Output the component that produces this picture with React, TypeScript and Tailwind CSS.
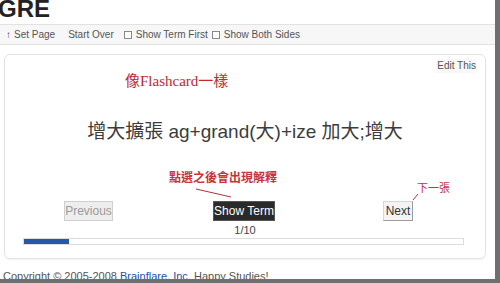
import React from 'react';

const SANS = { fontFamily: '"Liberation Sans", "Noto Sans CJK TC", sans-serif' };

function Box() {
  return <span className="inline-block w-[8px] h-[8px] border border-[#8a8a8a] bg-white mr-[4px]" />;
}

export default function App() {
  return (
    <div className="w-[500px] h-[283px] overflow-hidden bg-[#6f6f6f]" style={SANS}>
      <div className="w-[495px] h-[279px] overflow-hidden bg-white">
        <h1 className="text-[24px] leading-[24px] font-bold text-[#222] -mt-[3px] -ml-[2px]">GRE</h1>

        {/* toolbar */}
        <div className="mt-[3px] h-[21px] border-y border-[#e2e2e2] bg-[#f7f7f7] flex items-center text-[10px] text-[#555]">
          <span className="ml-[6px] text-[#4a3d8f]">↑</span>
          <span className="ml-[3px]">Set Page</span>
          <span className="ml-[13px]">Start Over</span>
          <span className="ml-[10px] flex items-center"><Box />Show Term First</span>
          <span className="ml-[4px] flex items-center"><Box />Show Both Sides</span>
        </div>

        {/* card */}
        <div className="relative mt-[9px] ml-[4px] w-[482px] border border-[#e3e3e3] rounded-[6px] shadow-[0_1px_2px_rgba(0,0,0,0.06)] flex flex-col">
          <div className="pt-[4px] pr-[8px] flex justify-end">
            <span className="text-[10px] leading-[14px] text-[#555] bg-[#f8f8f6] px-[1px]">Edit This</span>
          </div>

          <div className="mt-[45px] h-[28px] text-center text-[19px] leading-[28px] text-[#3c3c3c]">
            增大擴張 ag+grand(大)+ize 加大;增大
          </div>

          <div className="mt-[55px] flex items-start text-[12px]">
            <button className="ml-[59px] w-[49px] h-[20px] bg-[#eeeeee] border border-[#d0d0d0] text-[#9a9a9a]">Previous</button>
            <button className="ml-[100px] w-[62px] h-[20px] bg-[#2a2a2a] border border-[#555] text-white">Show Term</button>
            <button className="ml-[108px] w-[30px] h-[20px] bg-[#f4f4f4] border border-[#d6d6d6] border-r-[#9c9c9c] border-b-[#9c9c9c] text-[#333]">Next</button>
          </div>

          <div className="mt-[3px] text-center text-[11px] leading-[13px] text-[#444]">1/10</div>

          <div className="mt-[1px] ml-[18px] w-[441px] h-[7px] border border-[#dcdcdc] bg-white">
            <div className="h-full w-[45px] bg-[#2558a8]" />
          </div>
          <div className="h-[13px]" />

          {/* annotations */}
          <span
            className="absolute left-[120px] top-[17px] text-[15px] leading-[18px] text-[#c4262e]"
            style={{ fontFamily: '"Liberation Serif", "Noto Sans CJK TC", serif' }}
          >
            像Flashcard一樣
          </span>
          <span className="absolute left-[164px] top-[116px] text-[12px] leading-[14px] font-bold text-[#c8333a]">點選之後會出現解釋</span>
          <span className="absolute left-[412px] top-[126px] text-[11px] leading-[14px] text-[#c8333a]">下一張</span>
          <svg className="absolute left-0 top-0 pointer-events-none" width="482" height="205">
            <line x1="191" y1="134" x2="226" y2="142" stroke="#b0303a" strokeWidth="1" />
            <line x1="408" y1="145" x2="413" y2="139" stroke="#b0303a" strokeWidth="1" />
          </svg>
        </div>

        <div className="mt-[11px] ml-[3px] text-[11px] leading-[13px] text-[#555] whitespace-nowrap">
          Copyright © 2005-2008 <span className="text-[#1f4f9f]">Brainflare, Inc.</span> Happy Studies!
        </div>
      </div>
    </div>
  );
}
